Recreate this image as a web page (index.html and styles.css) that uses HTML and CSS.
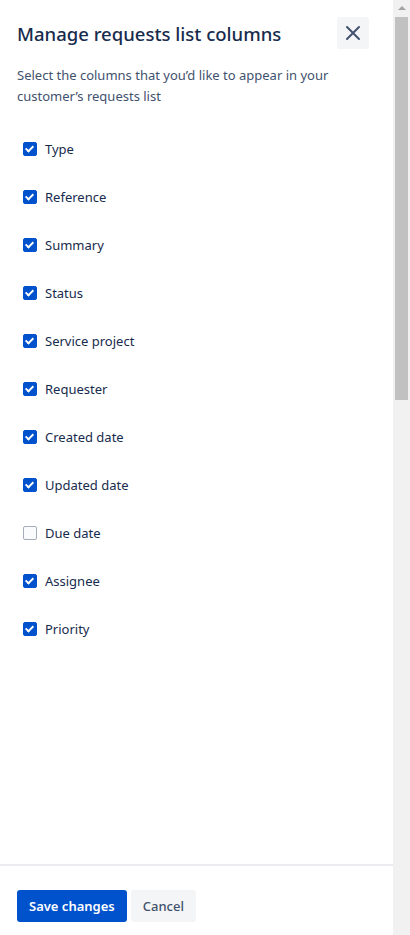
FILE: index.html
```html
<!DOCTYPE html>
<html lang="en">
<head>
    <meta charset="UTF-8">
    <meta name="viewport" content="width=device-width, initial-scale=1.0">
    <title>Manage requests list columns</title>
    <link rel="stylesheet" href="styles.css">
</head>
<body>
    <div class="drawer">
        <div class="content">
            <header class="head">
                <h1>Manage requests list columns</h1>
                <button class="close" type="button" aria-label="Close">
                    <svg width="20" height="20" viewBox="0 0 20 20"><path d="M4 4l12 12M16 4L4 16" stroke="#42526e" stroke-width="2" stroke-linecap="round"/></svg>
                </button>
            </header>
            <p class="desc">Select the columns that you’d like to appear in your customer’s requests list</p>
            <ul class="columns">
                <li><label><span class="box on"></span>Type</label></li>
                <li><label><span class="box on"></span>Reference</label></li>
                <li><label><span class="box on"></span>Summary</label></li>
                <li><label><span class="box on"></span>Status</label></li>
                <li><label><span class="box on"></span>Service project</label></li>
                <li><label><span class="box on"></span>Requester</label></li>
                <li><label><span class="box on"></span>Created date</label></li>
                <li><label><span class="box on"></span>Updated date</label></li>
                <li><label><span class="box"></span>Due date</label></li>
                <li><label><span class="box on"></span>Assignee</label></li>
                <li><label><span class="box on"></span>Priority</label></li>
            </ul>
        </div>
        <footer class="foot">
            <button class="btn primary" type="button">Save changes</button>
            <button class="btn subtle" type="button">Cancel</button>
        </footer>
    </div>
    <div class="scrollbar">
        <div class="arrow"></div>
        <div class="thumb"></div>
    </div>
</body>
</html>
```

FILE: styles.css
```css
body {
    margin: 0;
    height: 935px;
    display: flex;
    font-family: "Noto Sans", "Open Sans", sans-serif;
    color: #172b4d;
    background: #fff;
    overflow: hidden;
}
.drawer {
    width: 393px;
    display: flex;
    flex-direction: column;
}
.content {
    flex: 1;
    padding: 17px 24px 0 17px;
}
.head {
    display: flex;
    justify-content: space-between;
    align-items: center;
}
.head h1 {
    margin: 0;
    font-size: 18.5px;
    font-weight: 500;
    color: #172b4d;
}
.close {
    width: 32px;
    height: 32px;
    border: 0;
    border-radius: 3px;
    background: #f4f5f7;
    display: flex;
    align-items: center;
    justify-content: center;
    padding: 0;
}
.desc {
    margin: 16px 0 0;
    font-size: 13px;
    line-height: 21px;
    color: #42526e;
}
.columns {
    list-style: none;
    margin: 18px 0 0;
    padding: 0;
}
.columns li {
    height: 48px;
    display: flex;
    align-items: center;
}
.columns label {
    display: flex;
    align-items: center;
    font-size: 13px;
    color: #172b4d;
}
.box {
    width: 12px;
    height: 12px;
    margin: 0 8px 0 6px;
    border: 1px solid #a5adba;
    border-radius: 2px;
    background: #fafbfc;
    position: relative;
}
.box.on {
    background: #0052cc;
    border-color: #0052cc;
}
.box.on::after {
    content: "";
    position: absolute;
    left: 3px;
    top: 1px;
    width: 3px;
    height: 6px;
    border: solid #fff;
    border-width: 0 2px 2px 0;
    transform: rotate(45deg);
}
.foot {
    border-top: 2px solid #ebecf0;
    padding: 24px 17px 13px;
    height: 32px;
    display: flex;
    gap: 4px;
}
.btn {
    height: 32px;
    border: 0;
    border-radius: 3px;
    padding: 0 12px;
    font-family: "Noto Sans", "Open Sans", sans-serif;
    font-size: 13px;
    font-weight: 600;
}
.primary {
    background: #0052cc;
    color: #fff;
}
.subtle {
    background: #f4f5f7;
    color: #42526e;
    font-weight: 500;
}
.scrollbar {
    width: 17px;
    background: #f1f1f1;
    display: flex;
    flex-direction: column;
    align-items: center;
}
.arrow {
    width: 0;
    height: 4px;
    border-left: 4px solid transparent;
    border-right: 4px solid transparent;
    border-bottom: 4px solid #a3a3a3;
    box-sizing: border-box;
    margin: 6px 0 7px;
}
.thumb {
    width: 13px;
    height: 383px;
    background: #c1c1c1;
}
```
